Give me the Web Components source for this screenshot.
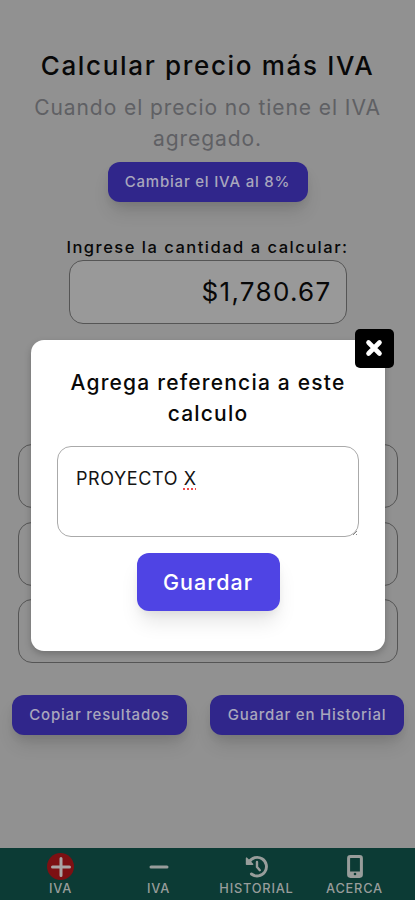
<!DOCTYPE html>
<html lang="es">
<head>
<meta charset="utf-8">
<meta name="viewport" content="width=device-width, initial-scale=1">
<title>Calcular precio más IVA</title>
<style>
    html, body {
        margin: 0;
        height: 100%;
        overflow: hidden;
        background: #919191;
        font-family: Inter, "Liberation Sans", sans-serif;
    }
</style>
</head>
<body>
<iva-app></iva-app>

<script>
class IvaButton extends HTMLElement {
    constructor() {
        super();
        this.attachShadow({ mode: "open" });
        this.shadowRoot.innerHTML = `
            <style>
                :host { display: block; }
                button {
                    display: block;
                    box-sizing: border-box;
                    width: 100%;
                    height: 40px;
                    padding: 0;
                    border: 0;
                    border-radius: 12px;
                    background: #30268b;
                    color: #a9a7bd;
                    font: 500 15px/40px Inter, sans-serif;
                    letter-spacing: .79px;
                    white-space: nowrap;
                    box-shadow: 0 12px 18px -3px rgba(0, 0, 0, .13), 0 5px 8px -2px rgba(0, 0, 0, .08);
                }
                :host([primary]) button {
                    height: 58px;
                    background: #4f44e4;
                    color: #fff;
                    font-size: 21.5px;
                    line-height: 58px;
                    letter-spacing: 1px;
                    box-shadow: 0 14px 20px -3px rgba(0, 0, 0, .1), 0 5px 8px -2px rgba(0, 0, 0, .06);
                }
            </style>
            <button><slot></slot></button>
        `;
    }
}
customElements.define('iva-button', IvaButton);

class IvaField extends HTMLElement {
    constructor() {
        super();
        this.attachShadow({ mode: "open" });
        this.shadowRoot.innerHTML = `
            <style>
                :host {
                    display: block;
                    box-sizing: border-box;
                    height: 64px;
                    padding-right: 14px;
                    border: 1px solid #555;
                    border-radius: 14px;
                    background: var(--fill, #919191);
                    color: #080808;
                    font-size: 26px;
                    line-height: 62px;
                    letter-spacing: 1.3px;
                    text-align: right;
                }
            </style>
            <slot></slot>
        `;
    }
}
customElements.define('iva-field', IvaField);

class NavItem extends HTMLElement {
    constructor() {
        super();
        this.attachShadow({ mode: "open" });
        this.shadowRoot.innerHTML = `
            <style>
                :host {
                    display: flex;
                    flex-direction: column;
                    align-items: center;
                    color: #989d9b;
                    font-size: 12.8px;
                    font-weight: 500;
                    line-height: 15px;
                    letter-spacing: .8px;
                }
                .icon {
                    display: flex;
                    align-items: center;
                    justify-content: center;
                    width: 27px;
                    height: 27px;
                    margin: 5px 0 1px;
                    border-radius: 50%;
                }
                :host([active]) .icon { background: #7d1013; }
            </style>
            <div class="icon"><slot name="icon"></slot></div>
            <span><slot></slot></span>
        `;
    }
}
customElements.define('nav-item', NavItem);

class ReferenceDialog extends HTMLElement {
    constructor() {
        super();
        this.attachShadow({ mode: "open" });
        this.shadowRoot.innerHTML = `
            <style>
                /* floats over the calculator */
                :host {
                    position: absolute;
                    left: 31px;
                    top: 340px;
                    box-sizing: border-box;
                    width: 354px;
                    height: 311px;
                    padding: 27px 26px 0;
                    border-radius: 13px;
                    background: #fff;
                    box-shadow: 0 3px 7px rgba(0, 0, 0, .22);
                }
                h2 {
                    margin: 0;
                    color: #080808;
                    font-size: 21px;
                    font-weight: 500;
                    line-height: 31px;
                    letter-spacing: 1.2px;
                    text-align: center;
                    white-space: nowrap;
                }
                .note {
                    position: relative;
                    box-sizing: border-box;
                    height: 91px;
                    margin: 17px 0 16px;
                    padding: 20px 18px;
                    border: 1px solid #aaa;
                    border-radius: 14px;
                    color: #141414;
                    font-size: 18px;
                    line-height: 24px;
                    letter-spacing: .6px;
                    text-align: left;
                }
                .typo {
                    text-decoration: underline dotted #f04a4a 2px;
                    text-underline-offset: 3px;
                    text-decoration-skip-ink: none;
                }
                .grip { position: absolute; right: 0; bottom: 0; }
                iva-button { width: 143px; margin: 0 auto; }
                .close {
                    position: absolute;
                    top: -11px;
                    right: -9px;
                    display: flex;
                    align-items: center;
                    justify-content: center;
                    width: 39px;
                    height: 39px;
                    padding: 0 1px 1px 0;
                    border: 0;
                    border-radius: 5px;
                    background: #000;
                }
            </style>
            <h2>Agrega referencia a este<br>calculo</h2>
            <div class="note">PROYECTO <span class="typo">X</span>
                <svg class="grip" width="6" height="6"><path d="M1 5 5 1M4 5 5 4" stroke="#888"/></svg>
            </div>
            <iva-button primary>Guardar</iva-button>
            <button class="close" aria-label="Cerrar">
                <svg width="18" height="18" viewBox="0 0 18 18">
                    <path d="M3.5 3.5 14.5 14.5M14.5 3.5 3.5 14.5" stroke="#fff" stroke-width="4.6" stroke-linecap="round"/>
                </svg>
            </button>
        `;
    }
}
customElements.define('reference-dialog', ReferenceDialog);

class IvaApp extends HTMLElement {
    constructor() {
        super();
        this.attachShadow({ mode: "open" });
        this.shadowRoot.innerHTML = `
            <style>
                :host {
                    position: relative;
                    display: flex;
                    flex-direction: column;
                    width: 415px;
                    height: 900px;
                    text-align: center;
                    white-space: nowrap;
                    color: #080808;
                }
                main { flex: 1; padding-top: 48px; }
                h1 {
                    margin: 0;
                    font-size: 26px;
                    font-weight: 500;
                    line-height: 36px;
                    letter-spacing: 1.67px;
                }
                p {
                    margin: 8px 0 8px;
                    color: #5f6064;
                    font-size: 21px;
                    line-height: 31px;
                    letter-spacing: .93px;
                }
                .rate { width: 200px; margin: 0 auto; }
                label {
                    display: block;
                    margin-top: 34px;
                    font-size: 16.5px;
                    font-weight: 500;
                    line-height: 22px;
                    letter-spacing: 1.5px;
                }
                .amount { width: 278px; margin: 2px auto 0; --fill: #999; }
                .results {
                    display: grid;
                    gap: 13.5px;
                    margin: 120px 17px 0 18px;
                }
                .actions {
                    display: grid;
                    grid-template-columns: 175px 194px;
                    gap: 23px;
                    padding: 32px 0 0 12px;
                }
                nav {
                    display: grid;
                    grid-template-columns: repeat(4, 98px);
                    justify-content: center;
                    box-sizing: border-box;
                    height: 52px;
                    background: #0c3b35;
                }
                svg { display: block; }
            </style>
            <main>
                <h1>Calcular precio más IVA</h1>
                <p>Cuando el precio no tiene el IVA<br>agregado.</p>
                <iva-button class="rate">Cambiar el IVA al 8%</iva-button>
                <label>Ingrese la cantidad a calcular:</label>
                <iva-field class="amount">$1,780.67</iva-field>
                <div class="results">
                    <iva-field></iva-field>
                    <iva-field></iva-field>
                    <iva-field></iva-field>
                </div>
                <div class="actions">
                    <iva-button>Copiar resultados</iva-button>
                    <iva-button>Guardar en Historial</iva-button>
                </div>
            </main>
            <nav>
                <nav-item active>
                    <svg slot="icon" width="20" height="20"><path d="M10 1.5v17M1.5 10h17" stroke="#a9a5a5" stroke-width="3" stroke-linecap="round"/></svg>
                    IVA
                </nav-item>
                <nav-item>
                    <svg slot="icon" width="20" height="20"><path d="M2 10h16" stroke="#989d9b" stroke-width="3" stroke-linecap="round"/></svg>
                    IVA
                </nav-item>
                <nav-item>
                    <svg slot="icon" width="24" height="24" fill="none" stroke="#989d9b" stroke-linecap="round" stroke-linejoin="round">
                        <path d="M4 7.2A9.3 9.3 0 1 1 6.4 19" stroke-width="2.9"/>
                        <path d="M1.6 3.2V9.2H7.6Z" fill="#989d9b" stroke-width="1.6"/>
                        <path d="M12 7v5l2.8 3.2" stroke-width="2.4"/>
                    </svg>
                    HISTORIAL
                </nav-item>
                <nav-item>
                    <svg slot="icon" width="16" height="23">
                        <rect x="1.6" y="1.6" width="12.8" height="19.8" rx="1.8" fill="none" stroke="#989d9b" stroke-width="3"/>
                        <path d="M2 16.5h12v4.5H2z" fill="#989d9b"/>
                        <circle cx="8" cy="19" r="1.3" fill="#0c3b35"/>
                    </svg>
                    ACERCA
                </nav-item>
            </nav>
            <reference-dialog></reference-dialog>
        `;
    }
}
customElements.define('iva-app', IvaApp);
</script>
</body>
</html>
